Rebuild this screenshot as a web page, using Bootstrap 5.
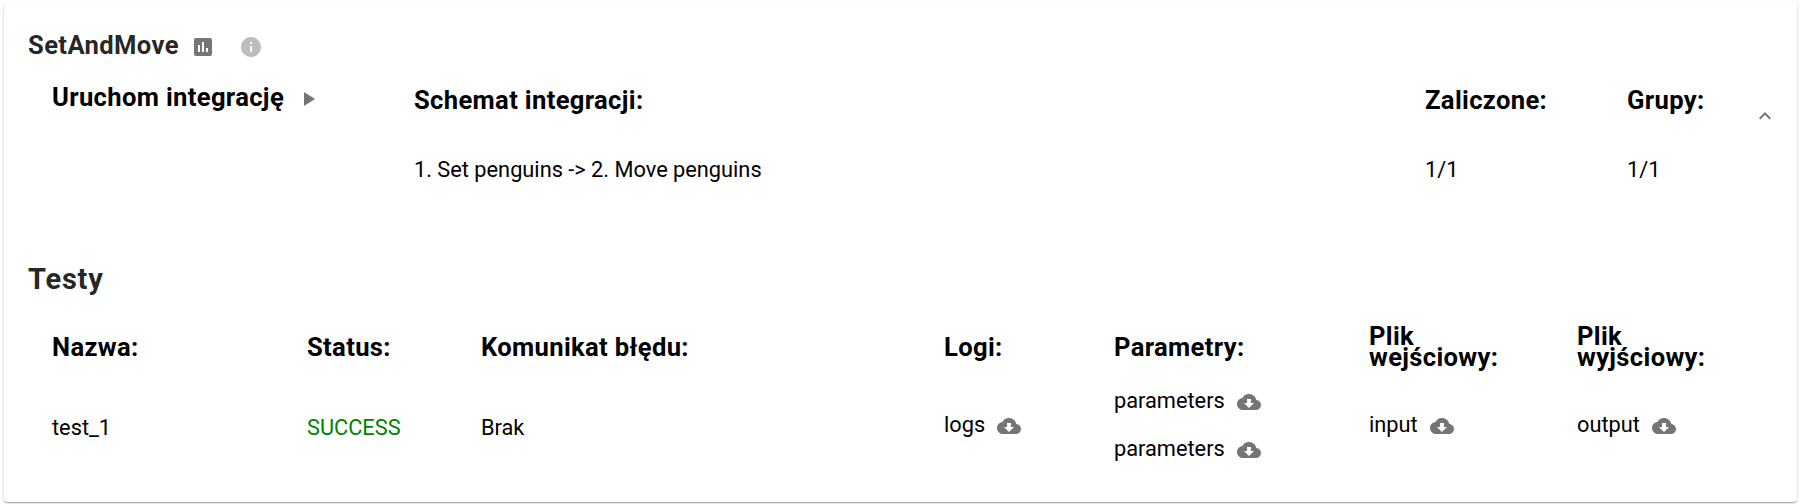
<!DOCTYPE html>
<html lang="pl">
<head>
<meta charset="utf-8">
<title>SetAndMove</title>
<link href="https://cdn.jsdelivr.net/npm/bootstrap@5.3.0/dist/css/bootstrap.min.css" rel="stylesheet">
<style>
body{font-family:Roboto,sans-serif;font-size:21.78px;line-height:24px;color:#000;background:#fff;padding:3px 6px 2px 4px}
.panel{height:499px;border:0;border-radius:4px;color:#000;padding:0 24px;box-shadow:0 1px 3px rgba(0,0,0,.2),0 1px 1px rgba(0,0,0,.14),0 2px 1px -1px rgba(0,0,0,.12)}
.title{font-size:25.6px;line-height:30px;font-weight:700;letter-spacing:.38px;color:rgba(0,0,0,.87);margin:0}
.heading{font-size:29px;letter-spacing:.8px;padding-top:8px}
.label{font-size:25.6px;line-height:21px;font-weight:700;letter-spacing:.34px}
.top-bar{padding-top:27px}
.top-bar svg{margin-top:5px}
.chart{margin-left:12px}
.info{fill:#bdbdbd}
.summary{display:grid;grid-template-columns:362px 1011px 202px 126px auto;padding-left:24px;height:196px}
.run{padding-top:27px}
.h-row{padding-top:30px}
.val{padding-top:47px}
.chev{padding-top:44px}
.tests{display:grid;grid-template-columns:255px 174px 463px 170px 255px 208px auto;padding-left:24px}
.th-row{height:68px;margin-top:19px}
.td-row{height:94px}
.dl{column-gap:12px}
.files{margin-top:-5px}
.params{row-gap:23px}
svg{fill:#757575;flex:none;display:block}
.dl svg{margin-top:1px}
.ok{color:green}
</style>
</head>
<body>
<svg width="0" height="0" class="position-absolute"><symbol id="cloud" viewBox="0 0 24 24"><path d="M19.35 10.04C18.67 6.59 15.64 4 12 4 9.11 4 6.6 5.64 5.35 8.04 2.34 8.36 0 10.91 0 14c0 3.31 2.69 6 6 6h13c2.76 0 5-2.24 5-5 0-2.64-2.05-4.78-4.65-4.96zM17 13l-5 5-5-5h3V9h4v4h3z"/></symbol></svg>
<main class="card panel">
  <header class="top-bar d-flex align-items-start">
    <h1 class="title">SetAndMove</h1>
    <svg class="chart" width="24" height="24" viewBox="0 0 24 24"><path d="M19 3H5c-1.1 0-2 .9-2 2v14c0 1.1.9 2 2 2h14c1.1 0 2-.9 2-2V5c0-1.1-.9-2-2-2zM9 17H7v-7h2v7zm4 0h-2V7h2v10zm4 0h-2v-4h2v4z"/></svg>
    <svg class="ms-4 info" width="24" height="24" viewBox="0 0 24 24"><path d="M12 2C6.48 2 2 6.48 2 12s4.48 10 10 10 10-4.48 10-10S17.52 2 12 2zm1 15h-2v-6h2v6zm0-8h-2V7h2v2z"/></svg>
  </header>
  <section class="summary">
    <div class="run d-flex align-items-start"><span class="label">Uruchom integrację</span>
      <svg class="ms-3" width="20" height="24" viewBox="0 0 20 24"><path d="M4 5v14l11-7z"/></svg></div>
    <div><div class="label h-row">Schemat integracji:</div><div class="val">1. Set penguins -&gt; 2. Move penguins</div></div>
    <div><div class="label h-row">Zaliczone:</div><div class="val">1/1</div></div>
    <div><div class="label h-row">Grupy:</div><div class="val">1/1</div></div>
    <div class="chev"><svg width="24" height="24" viewBox="0 0 24 24"><path d="M12 8l-6 6 1.41 1.41L12 10.83l4.59 4.58L18 14z"/></svg></div>
  </section>
  <h2 class="title heading">Testy</h2>
  <section class="tests th-row label align-items-center">
    <div>Nazwa:</div><div>Status:</div><div>Komunikat błędu:</div><div>Logi:</div><div>Parametry:</div><div>Plik<br>wejściowy:</div><div>Plik<br>wyjściowy:</div>
  </section>
  <section class="tests td-row align-items-center">
    <div>test_1</div><div class="ok">SUCCESS</div><div>Brak</div>
    <div class="d-flex dl files">logs<svg width="24" height="24"><use href="#cloud"/></svg></div>
    <div class="d-flex flex-column params files"><div class="d-flex dl">parameters<svg width="24" height="24"><use href="#cloud"/></svg></div><div class="d-flex dl">parameters<svg width="24" height="24"><use href="#cloud"/></svg></div></div>
    <div class="d-flex dl files">input<svg width="24" height="24"><use href="#cloud"/></svg></div>
    <div class="d-flex dl files">output<svg width="24" height="24"><use href="#cloud"/></svg></div>
  </section>
</main>
<script src="https://cdn.jsdelivr.net/npm/bootstrap@5.3.0/dist/js/bootstrap.bundle.min.js"></script>
</body>
</html>
